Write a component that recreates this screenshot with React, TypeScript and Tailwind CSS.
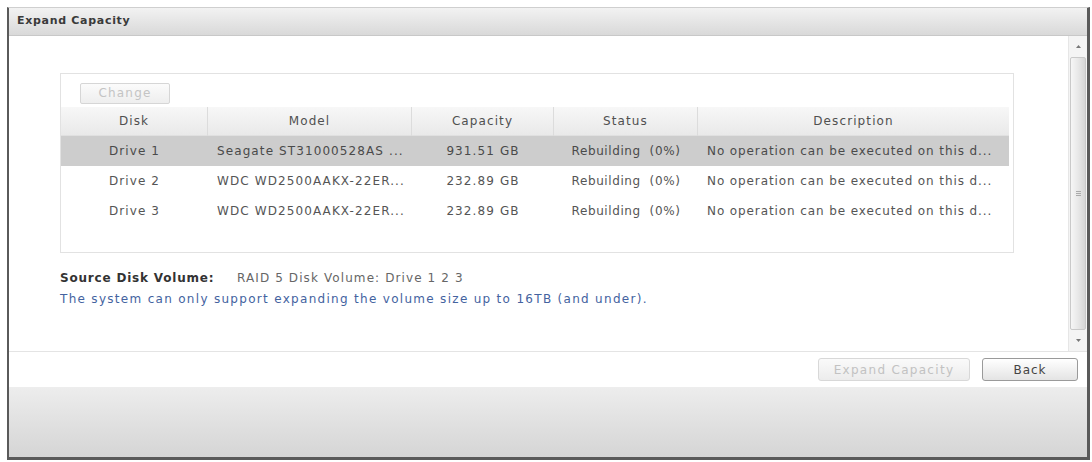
import React from 'react';

const rows = [
  { disk: 'Drive 1', model: 'Seagate ST31000528AS ...', capacity: '931.51 GB', status: 'Rebuilding  (0%)', selected: true },
  { disk: 'Drive 2', model: 'WDC WD2500AAKX-22ER...', capacity: '232.89 GB', status: 'Rebuilding  (0%)', selected: false },
  { disk: 'Drive 3', model: 'WDC WD2500AAKX-22ER...', capacity: '232.89 GB', status: 'Rebuilding  (0%)', selected: false },
];

const desc = 'No operation can be executed on this d...';

export default function App() {
  return (
    <div
      className="w-[1092px] h-[462px] bg-white pt-[7px] pl-[7px] pr-[2px] pb-[2px] overflow-hidden"
      style={{ fontFamily: '"DejaVu Sans", Verdana, sans-serif' }}
    >
      <div className="flex flex-col h-full border-l-2 border-r-[3px] border-b-[3px] border-[#5a5a5a] border-t border-t-[#cfcfcf]">
        {/* title bar */}
        <div className="h-[28px] flex items-center pl-[8px] bg-gradient-to-b from-[#f2f2f2] to-[#d9d9d9] border-b border-[#c8c8c8]">
          <span className="text-[11px] font-bold tracking-[0.7px] text-[#3a3a3a]">Expand Capacity</span>
        </div>

        {/* body */}
        <div className="flex h-[316px] border-b border-[#e4e4e4]">
          <div className="flex-1 bg-white pl-[51px] pt-[37px]">
            <div className="w-[954px] h-[180px] border border-[#e2e2e2] flex flex-col">
              <div className="h-[33px] pl-[19px] pt-[6px]">
                <button className="w-[90px] h-[21px] border border-[#d6d6d6] rounded-[2px] bg-gradient-to-b from-[#fbfbfb] to-[#eeeeee] text-[12px] tracking-[1.2px] text-[#c4c4c4]">
                  Change
                </button>
              </div>
              <div className="mr-[4px] text-[12px] tracking-[1.1px] text-[#555]">
                <div className="flex h-[29px] items-center bg-gradient-to-b from-[#f7f7f7] to-[#e9e9e9] text-[#505050] border-b border-[#e0e0e0]">
                  <div className="w-[147px] text-center border-r border-[#dcdcdc] leading-[29px]">Disk</div>
                  <div className="w-[204px] text-center border-r border-[#dcdcdc] leading-[29px]">Model</div>
                  <div className="w-[142px] text-center border-r border-[#dcdcdc] leading-[29px]">Capacity</div>
                  <div className="w-[144px] text-center border-r border-[#dcdcdc] leading-[29px]">Status</div>
                  <div className="flex-1 text-center leading-[29px]">Description</div>
                </div>
                {rows.map((r) => (
                  <div
                    key={r.disk}
                    className={`flex h-[30px] items-center ${r.selected ? 'bg-[#cdcdcd] text-[#4a4a4a]' : 'bg-white'}`}
                  >
                    <div className="w-[147px] text-center">{r.disk}</div>
                    <div className="w-[204px] pl-[9px] whitespace-nowrap">{r.model}</div>
                    <div className="w-[142px] text-center">{r.capacity}</div>
                    <div className="w-[144px] text-center whitespace-pre tracking-[0.6px]">{r.status}</div>
                    <div className="flex-1 pl-[9px] whitespace-nowrap tracking-[0.9px]">{desc}</div>
                  </div>
                ))}
              </div>
            </div>

            <div className="mt-[17px] flex items-center text-[12px] leading-[16px]">
              <span className="font-bold tracking-[0.8px] text-[#333] w-[177px]">Source Disk Volume:</span>
              <span className="tracking-[1.1px] text-[#666]">RAID 5 Disk Volume: Drive 1 2 3</span>
            </div>
            <div className="mt-[5px] text-[12px] leading-[16px] tracking-[1.3px] text-[#44639f]">
              The system can only support expanding the volume size up to 16TB (and under).
            </div>
          </div>

          {/* scrollbar */}
          <div className="w-[19px] flex flex-col bg-[#f4f4f4] border-l border-[#e6e6e6]">
            <div className="h-[21px] flex items-center justify-center">
              <svg width="5" height="3" viewBox="0 0 5 3">
                <path d="M0 3 L2.5 0 L5 3 Z" fill="#777" />
              </svg>
            </div>
            <div className="flex-1 mx-[1px] border border-[#c9c9c9] rounded-[2px] bg-gradient-to-r from-[#f6f6f6] via-[#e8e8e8] to-[#d6d6d6] flex items-center justify-center">
              <div className="flex flex-col gap-[1px]">
                <div className="w-[5px] h-px bg-[#aaa]" />
                <div className="w-[5px] h-px bg-[#aaa]" />
                <div className="w-[5px] h-px bg-[#aaa]" />
              </div>
            </div>
            <div className="h-[21px] flex items-center justify-center">
              <svg width="5" height="3" viewBox="0 0 5 3">
                <path d="M0 0 L2.5 3 L5 0 Z" fill="#777" />
              </svg>
            </div>
          </div>
        </div>

        {/* button bar */}
        <div className="h-[35px] flex items-center justify-end gap-[12px] pr-[9px] bg-white">
          <button className="w-[152px] h-[23px] border border-[#d8d8d8] rounded-[3px] bg-gradient-to-b from-[#fafafa] to-[#ececec] text-[12px] tracking-[1.3px] text-[#c2c2c2]">
            Expand Capacity
          </button>
          <button className="w-[96px] h-[23px] border border-[#9a9a9a] rounded-[3px] bg-gradient-to-b from-[#ffffff] to-[#e4e4e4] text-[12px] tracking-[1px] text-[#444]">
            Back
          </button>
        </div>

        {/* footer */}
        <div className="flex-1 bg-gradient-to-b from-[#ededed] to-[#d5d5d5]" />
      </div>
    </div>
  );
}
